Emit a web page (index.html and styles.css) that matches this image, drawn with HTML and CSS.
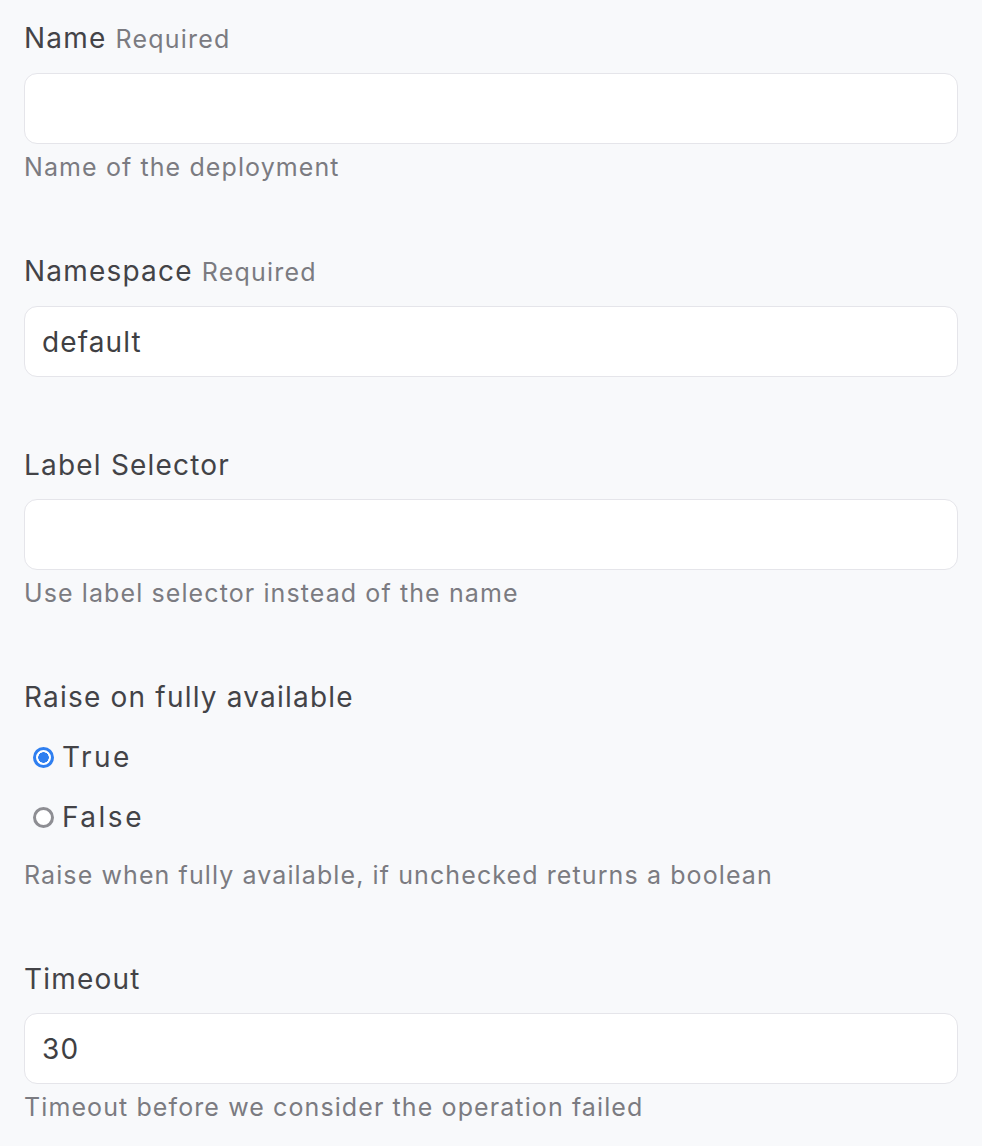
FILE: index.html
```html
<!DOCTYPE html>
<html lang="en">
<head>
<meta charset="utf-8">
<title>Deployment form</title>
<link rel="stylesheet" href="styles.css">
</head>
<body>
<form class="form">
  <div class="field">
    <label class="label" for="f-name">Name <span class="req">Required</span></label>
    <input class="input" id="f-name" type="text" value="">
    <div class="help">Name of the deployment</div>
  </div>
  <div class="field">
    <label class="label" for="f-ns">Namespace <span class="req">Required</span></label>
    <input class="input" id="f-ns" type="text" value="default">
  </div>
  <div class="field">
    <label class="label" for="f-sel">Label Selector</label>
    <input class="input" id="f-sel" type="text" value="">
    <div class="help">Use label selector instead of the name</div>
  </div>
  <div class="field">
    <div class="label">Raise on fully available</div>
    <div class="radios">
      <label class="radio"><input class="radio-input" type="radio" name="raise" checked><span class="radio-text">True</span></label>
      <label class="radio"><input class="radio-input" type="radio" name="raise"><span class="radio-text">False</span></label>
    </div>
    <div class="help help-radio">Raise when fully available, if unchecked returns a boolean</div>
  </div>
  <div class="field">
    <label class="label" for="f-to">Timeout</label>
    <input class="input" id="f-to" type="text" value="30">
    <div class="help">Timeout before we consider the operation failed</div>
  </div>
</form>
</body>
</html>
```

FILE: styles.css
```css
html, body {
  margin: 0;
  padding: 0;
  background: #f8f9fb;
}
body {
  font-family: Inter, "Liberation Sans", sans-serif;
  color: #434347;
}
.form {
  display: flex;
  flex-direction: column;
  gap: 70px;
  padding: 20px 24px 0 24px;
}
.field {
  display: flex;
  flex-direction: column;
}
.label {
  font-size: 28px;
  line-height: 36px;
  letter-spacing: 1.2px;
  color: #434347;
  margin-bottom: 16px;
}
.req {
  font-size: 25px;
  letter-spacing: 1.2px;
  color: #7b7b81;
}
.input {
  box-sizing: border-box;
  height: 71px;
  width: 100%;
  margin: 0;
  padding: 0 17px;
  border: 1.5px solid #e5e5ea;
  border-radius: 13px;
  background: #ffffff;
  font-family: Inter, "Liberation Sans", sans-serif;
  font-size: 28px;
  letter-spacing: 1.1px;
  color: #3f3f43;
  outline: none;
}
.help {
  font-size: 25px;
  line-height: 32px;
  letter-spacing: 1.1px;
  color: #7b7b81;
  margin-top: 7px;
}
.radios {
  display: flex;
  flex-direction: column;
  gap: 24px;
  padding-left: 9px;
  margin-top: 8px;
}
.radio {
  display: flex;
  align-items: center;
  gap: 8px;
  height: 36px;
  font-size: 28px;
  letter-spacing: 2.5px;
  color: #434347;
}
.radio-input {
  appearance: none;
  -webkit-appearance: none;
  margin: 0;
  width: 21px;
  height: 21px;
  border-radius: 50%;
  border: 3px solid #8e8e93;
  background: #ffffff;
  box-sizing: border-box;
}
.radio-input:checked {
  border-color: #2f7ff0;
  background: radial-gradient(circle, #2f7ff0 0 5px, #ffffff 5.5px);
}
.help-radio {
  margin-top: 24px;
}
```
